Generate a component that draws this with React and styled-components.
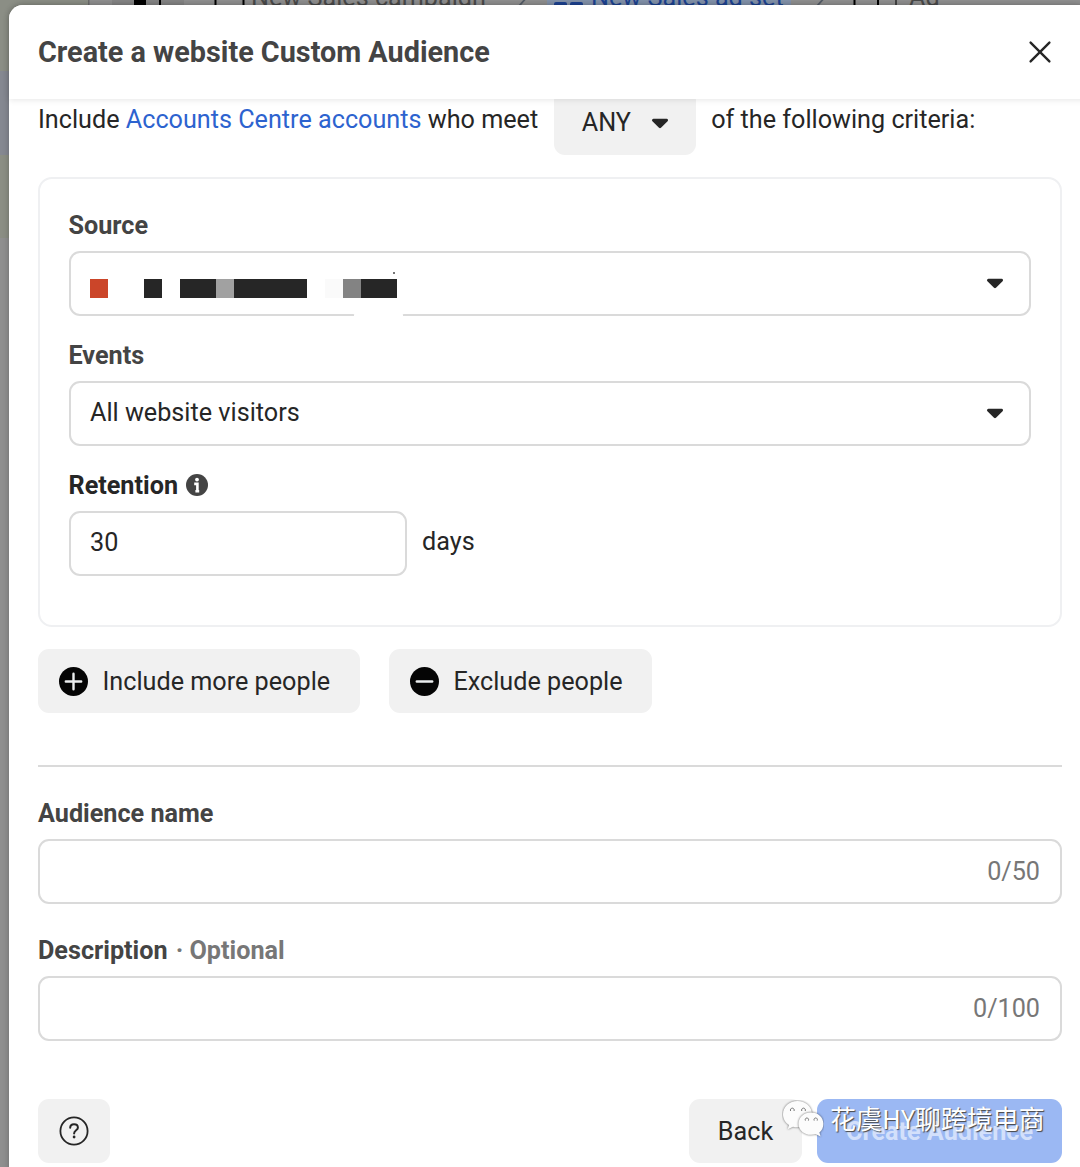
import React from "react";
import styled, { createGlobalStyle } from "styled-components";

const GlobalStyle = createGlobalStyle`
  * {
    box-sizing: border-box;
  }
  body {
    margin: 0;
    font-family: Roboto, "Noto Sans CJK SC", sans-serif;
    font-size: 25.2px;
    color: #262626;
    overflow: hidden;
  }
  button,
  input {
    font: inherit;
    color: inherit;
  }
`;

const mosaic = [
  "#cb4529",
  "transparent",
  "transparent",
  "#262626",
  "transparent",
  "#262626",
  "#262626",
  "#a1a1a1",
  "#262626",
  "#262626",
  "#262626",
  "#262626",
  "transparent",
  "#fafafa",
  "#838383",
  "#262626",
  "#262626",
];

const Caret = () => (
  <svg width="18" height="12" viewBox="0 0 18 12">
    <path
      d="M2.4 2.2H15.6L9 8.8Z"
      fill="#262626"
      stroke="#262626"
      strokeWidth="2.8"
      strokeLinejoin="round"
    />
  </svg>
);

const CloseIcon = () => (
  <svg width="24" height="24" viewBox="0 0 24 24">
    <path
      d="M2.6 2.6 21.4 21.4M21.4 2.6 2.6 21.4"
      stroke="#262626"
      strokeWidth="2.4"
      strokeLinecap="round"
    />
  </svg>
);

const InfoIcon = () => (
  <svg width="22" height="22" viewBox="0 0 22 22">
    <circle cx="11" cy="11" r="11" fill="#444" />
    <circle cx="11" cy="5.6" r="1.9" fill="#fff" />
    <path
      d="M8.2 9.9H11.4V17.6M9.4 17.2H13.2"
      fill="none"
      stroke="#fff"
      strokeWidth="2.6"
    />
  </svg>
);

const SignIcon = ({ plus }) => (
  <svg width="29" height="29" viewBox="0 0 29 29">
    <circle cx="14.5" cy="14.5" r="14.5" fill="#050505" />
    <path
      d={plus ? "M6.8 14.5H22.2M14.5 6.8V22.2" : "M6.8 14.5H22.2"}
      stroke="#eceeef"
      strokeWidth="2.4"
      strokeLinecap="round"
    />
  </svg>
);

const HelpIcon = () => (
  <svg width="30" height="30" viewBox="0 0 30 30" fill="none">
    <circle cx="15" cy="15" r="13.6" stroke="#262626" strokeWidth="1.8" />
    <path
      d="M11.2 11.8C11.2 9.5 12.8 8.3 15 8.3S18.9 9.7 18.9 11.7C18.9 14.3 15.1 14.4 15.1 17.4"
      stroke="#262626"
      strokeWidth="2"
      strokeLinecap="round"
    />
    <circle cx="15.1" cy="21" r="1.4" fill="#262626" />
  </svg>
);

const WechatIcon = () => (
  <svg width="42" height="38" viewBox="0 0 42 38" fill="#fcfcfc">
    <path
      className="bubble"
      d="M15.5 1C7.4 1 1 6.5 1 14.2C1 18.7 3.3 22.6 7 25L5.7 29.3L11 26.7C12.4 27.1 14 27.3 15.6 27.3C23.6 27.3 30 21.4 30 14.2C30 6.6 23.5 1 15.5 1Z"
    />
    <path
      className="bubble"
      d="M29 12.5C22 12.5 16.5 17.3 16.5 23.7C16.5 30 22 34.8 29 34.8C30.6 34.8 32.1 34.6 33.5 34.1L38.6 36.5L37.4 32.5C40 30.4 41.4 27.2 41.4 23.7C41.4 17.3 36 12.5 29 12.5Z"
    />
    <path
      d="M8.6 11A1.9 2 0 1 1 12 11M19.8 11A1.9 2 0 1 1 23.2 11M23.4 20.6A1.7 1.8 0 1 1 26.4 20.6M32.2 20.6A1.7 1.8 0 1 1 35.2 20.6"
      fill="none"
      stroke="#777"
    />
  </svg>
);

const App = () => {
  return (
    <>
      <GlobalStyle />
      <Page>
        <Backdrop>
          <svg width="1080" height="6" viewBox="0 0 1080 6">
            <path d="M88 0H1080V6H88Z" fill="#909090" />
            <path d="M112 0H184V6H112Z" fill="#858585" />
            <path d="M88 0H89.5V6H88Z" fill="#6c6c6c" />
            <path
              d="M134 0H146V6H134ZM159 0H161V6H159ZM214.5 0H216.5V6H214.5ZM242.5 0H244.5V6H242.5ZM853.5 0H855.5V6H853.5ZM877 0H879V6H877Z"
              fill="#000"
            />
            <path d="M547 0H791V6H547Z" fill="#8393ab" />
            <rect x="554" y="2" width="13" height="6" rx="2" fill="#1d4392" />
            <rect x="570" y="2" width="13" height="6" rx="2" fill="#1d4392" />
            <path
              d="M528 -4 519 6M826 -4 817 6"
              stroke="#555d68"
              strokeWidth="1.8"
            />
            <path d="M895 0H897V6H895Z" fill="#444" />
          </svg>
          <Crumb $left={251}>New Sales campaign</Crumb>
          <Crumb $left={591} $active>
            New Sales ad set
          </Crumb>
          <Crumb $left={909}>Ad</Crumb>
        </Backdrop>
        <Dialog>
          <Header>
            <Title>Create a website Custom Audience</Title>
            <CloseButton aria-label="Close">
              <CloseIcon />
            </CloseButton>
          </Header>
          <Body>
            <Criteria>
              <span>
                Include <Link href="#">Accounts Centre accounts</Link> who meet
              </span>
              <AnyButton>
                ANY
                <Caret />
              </AnyButton>
              <span>of the following criteria:</span>
            </Criteria>
            <Card>
              <Field>
                <Label>Source</Label>
                <SelectBox>
                  <Mosaic>
                    {mosaic.map((color, i) => (
                      <Pixel key={i} $color={color} />
                    ))}
                  </Mosaic>
                  <Caret />
                  <Speck />
                  <Smudge />
                </SelectBox>
              </Field>
              <Field>
                <Label>Events</Label>
                <SelectBox>
                  <SelectValue>All website visitors</SelectValue>
                  <Caret />
                </SelectBox>
              </Field>
              <Field>
                <Label $dark>
                  Retention
                  <InfoIcon />
                </Label>
                <Days>
                  <DaysInput defaultValue="30" />
                  <DaysUnit>days</DaysUnit>
                </Days>
              </Field>
            </Card>
            <Actions>
              <ActionButton $width={322}>
                <SignIcon plus />
                Include more people
              </ActionButton>
              <ActionButton $width={263}>
                <SignIcon />
                Exclude people
              </ActionButton>
            </Actions>
            <Divider />
            <NameField>
              <Label>Audience name</Label>
              <CountBox>0/50</CountBox>
            </NameField>
            <NameField>
              <Label>
                Description
                <Optional>· Optional</Optional>
              </Label>
              <CountBox>0/100</CountBox>
            </NameField>
          </Body>
          <Footer>
            <FooterButton $width={72} aria-label="Help">
              <HelpIcon />
            </FooterButton>
            <FooterRight>
              <FooterButton $width={113}>Back</FooterButton>
              <FooterButton $width={245} $primary>
                Create Audience
              </FooterButton>
            </FooterRight>
          </Footer>
          <Watermark>
            <WechatIcon />
            <span>花虞HY聊跨境电商</span>
          </Watermark>
        </Dialog>
      </Page>
    </>
  );
};

export default App;

const Page = styled.div`
  display: grid;
  width: 1080px;
  height: 1167px;
  overflow: hidden;
`;

const Backdrop = styled.div`
  grid-area: 1 / 1;
  position: relative;
  overflow: hidden;
  background: linear-gradient(
    #8b8e85 0 71px,
    #858891 71px 155px,
    #8b8e84 155px 238px,
    #8f8f8f 238px
  );

  svg {
    display: block;
  }
`;

const Crumb = styled.span`
  position: absolute;
  top: -17px;
  left: ${(props) => props.$left}px;
  line-height: 30px;
  white-space: nowrap;
  color: ${(props) => (props.$active ? "#1d4392" : "#4b4b4b")};
`;

const Dialog = styled.div`
  grid-area: 1 / 1;
  position: relative;
  display: flex;
  flex-direction: column;
  margin: 5px 0 0 9px;
  width: 1080px;
  height: 1180px;
  padding-right: 18px;
  background: #fff;
  border-radius: 14px 14px 0 0;
  box-shadow: 0 0 6px rgba(0, 0, 0, 0.25);
`;

const Header = styled.div`
  display: flex;
  align-items: center;
  justify-content: space-between;
  flex: none;
  height: 94px;
  margin-right: -18px;
  padding: 0 37px 0 29px;
  border-radius: 14px 0 0 0;
  background: #fff;
  box-shadow: 0 1px 6px rgba(0, 0, 0, 0.1);
  z-index: 1;
`;

const Title = styled.h1`
  margin: 0;
  font-size: 28.8px;
  font-weight: 700;
  color: #444;
`;

const CloseButton = styled.button`
  display: flex;
  padding: 0;
  border: 0;
  background: none;
`;

const Body = styled.div`
  display: flex;
  flex-direction: column;
  flex: none;
  height: 942px;
  padding: 0 9px 0 29px;
  overflow: hidden;
`;

const Criteria = styled.div`
  display: flex;
  align-items: center;
  flex: none;
  gap: 15.5px;
  height: 65px;
  margin-top: -9px;
  padding-bottom: 7px;
  white-space: nowrap;
`;

const Link = styled.a`
  color: #2d63cf;
  text-decoration: none;
`;

const AnyButton = styled.button`
  display: flex;
  align-items: center;
  justify-content: space-between;
  flex: none;
  width: 142px;
  height: 65px;
  margin-bottom: -7px;
  padding: 0 27px 0 28px;
  border: 0;
  border-radius: 11px;
  background: #f1f1f1;

  svg {
    margin-top: 2px;
  }
`;

const Card = styled.div`
  display: flex;
  flex-direction: column;
  flex: none;
  gap: 21px;
  height: 450px;
  margin-top: 22px;
  padding: 28px 29px 0 28.5px;
  border: 2px solid #eff0f2;
  border-radius: 14px;
`;

const Field = styled.div`
  display: flex;
  flex-direction: column;
  gap: 8px;
`;

const Label = styled.label`
  display: flex;
  align-items: center;
  gap: 8px;
  height: 36px;
  font-weight: 700;
  color: ${(props) => (props.$dark ? "#262626" : "#444")};
`;

const Optional = styled.span`
  color: #777;
`;

const SelectBox = styled.div`
  position: relative;
  display: flex;
  align-items: center;
  justify-content: space-between;
  height: 65px;
  padding: 0 25px 0 19.5px;
  border: 2px solid #dadada;
  border-radius: 11px;

  svg {
    margin-top: 1px;
  }
`;

const SelectValue = styled.span`
  padding-bottom: 2px;
`;

const Mosaic = styled.div`
  display: flex;
  padding-top: 10px;
`;

const Pixel = styled.span`
  width: 18.05px;
  height: 18.5px;
  background: ${(props) => props.$color};
`;

const Speck = styled.span`
  position: absolute;
  left: 322px;
  top: 19px;
  width: 2px;
  height: 2px;
  background: #777;
`;

// wiped-out part of the lower border
const Smudge = styled.span`
  position: absolute;
  left: 283px;
  bottom: -3px;
  width: 49px;
  height: 5px;
  border-radius: 50% 50% 0 0;
  background: #fff;
`;

const Days = styled.div`
  display: flex;
  align-items: center;
  gap: 15.5px;
`;

const DaysInput = styled.input`
  width: 338px;
  height: 65px;
  padding: 0 19.5px 2px;
  border: 2px solid #dadada;
  border-radius: 11px;
`;

const DaysUnit = styled.span`
  padding-bottom: 5px;
`;

const Actions = styled.div`
  display: flex;
  flex: none;
  gap: 29px;
  margin-top: 22px;
`;

const ActionButton = styled.button`
  display: flex;
  align-items: center;
  gap: 14.5px;
  width: ${(props) => props.$width}px;
  height: 64px;
  padding: 0 0 0 21px;
  border: 0;
  border-radius: 11px;
  background: #f1f1f1;
  white-space: nowrap;
`;

const Divider = styled.div`
  flex: none;
  height: 2px;
  margin: 52px 0 28px;
  background: #dadada;
`;

const NameField = styled(Field)`
  margin-bottom: 28px;
`;

const CountBox = styled.div`
  display: flex;
  align-items: center;
  justify-content: flex-end;
  height: 65px;
  padding: 0 20px;
  border: 2px solid #dadada;
  border-radius: 11px;
  color: #777;
`;

const Footer = styled.div`
  display: flex;
  justify-content: space-between;
  padding: 58px 9px 0 29px;
`;

const FooterRight = styled.div`
  display: flex;
  gap: 15px;
`;

const FooterButton = styled.button`
  display: flex;
  align-items: center;
  justify-content: center;
  width: ${(props) => props.$width}px;
  height: 64px;
  padding: 0;
  border: 0;
  border-radius: 11px;
  background: ${(props) => (props.$primary ? "#9bb8f3" : "#f1f1f1")};
  color: ${(props) => (props.$primary ? "#d3e0fb" : "#262626")};
  font-weight: ${(props) => (props.$primary ? 700 : 400)};
`;

const Watermark = styled.div`
  position: absolute;
  left: 773px;
  top: 1095px;
  display: flex;
  gap: 6px;
  white-space: nowrap;

  .bubble {
    filter: drop-shadow(0.5px 0.5px 0.8px rgba(0, 0, 0, 0.6));
  }

  span {
    font-family: "Noto Sans CJK SC", sans-serif;
    font-size: 26px;
    font-weight: 400;
    line-height: 36px;
    color: #fff;
    text-shadow: 1px 1px 1px #444;
  }
`;
